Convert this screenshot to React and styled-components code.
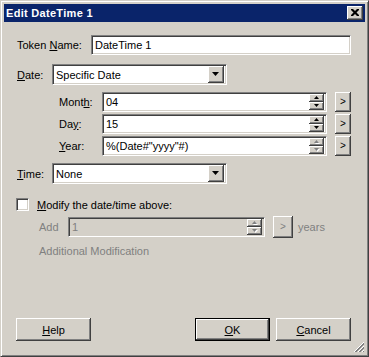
import React from 'react'
import styled, { createGlobalStyle } from 'styled-components'

const GlobalStyle = createGlobalStyle`
  html, body {
    margin: 0;
    padding: 0;
    background: #d4d0c8;
  }
  body {
    font-family: "Liberation Sans", Arial, sans-serif;
    font-size: 11px;
    color: #000;
  }
`

function Arrow({ up, disabled, size = 5 }) {
  const h = Math.ceil(size / 2)
  const pts = up
    ? `0,${h} ${size},${h} ${size / 2},0`
    : `0,0 ${size},0 ${size / 2},${h}`
  return (
    <svg width={size + 1} height={h + 1} viewBox={`0 0 ${size + 1} ${h + 1}`}>
      {disabled && <polygon points={pts} fill="#fff" transform="translate(1,1)" />}
      <polygon points={pts} fill={disabled ? '#808080' : '#000'} />
    </svg>
  )
}

function Spinner({ disabled }) {
  return (
    <Spin>
      <SpinBtn><Arrow up disabled={disabled} /></SpinBtn>
      <SpinBtn><Arrow disabled={disabled} /></SpinBtn>
    </Spin>
  )
}

function Combo({ value }) {
  return (
    <ComboBox>
      <FieldText>{value}</FieldText>
      <DropBtn><Arrow size={7} /></DropBtn>
    </ComboBox>
  )
}

function SpinRow({ label, value, disabled }) {
  return (
    <SubRow>
      <SubLabel>{label}</SubLabel>
      <Field $w={225}>
        <FieldText>{value}</FieldText>
        <Spinner disabled={disabled} />
      </Field>
      <MoreBtn>&gt;</MoreBtn>
    </SubRow>
  )
}

export default function App() {
  return (
    <>
      <GlobalStyle />
      <Window>
        <TitleBar>
          <Title>Edit DateTime 1</Title>
          <CloseBtn>
            <svg width="8" height="7" viewBox="0 0 8 7">
              <path d="M0 0h2l2 2l2-2h2v1l-2.5 2.5l2.5 2.5v1h-2l-2-2l-2 2h-2v-1l2.5-2.5l-2.5-2.5z" fill="#000" />
            </svg>
          </CloseBtn>
        </TitleBar>
        <Client>
          <Row>
            <Label $w={75}>Token <u>N</u>ame:</Label>
            <Field $grow>
              <FieldText>DateTime 1</FieldText>
            </Field>
          </Row>

          <Row $mt={9}>
            <Label $w={36}><u>D</u>ate:</Label>
            <Combo value="Specific Date" />
          </Row>

          <SubGroup>
            <SpinRow label={<>Mont<u>h</u>:</>} value="04" />
            <SpinRow label={<>Da<u>y</u>:</>} value="15" />
            <SpinRow label={<><u>Y</u>ear:</>} value={'%(Date#"yyyy"#)'} disabled />
          </SubGroup>

          <Row $mt={7}>
            <Label $w={36}><u>T</u>ime:</Label>
            <Combo value="None" />
          </Row>

          <Row $mt={14}>
            <CheckBox />
            <CheckLabel><u>M</u>odify the date/time above:</CheckLabel>
          </Row>

          <AddRow>
            <Muted $w={29}>Add</Muted>
            <Field $w={197} $disabled>
              <FieldText $disabled>1</FieldText>
              <Spinner disabled />
            </Field>
            <MoreBtn $h={22} $disabled>&gt;</MoreBtn>
            <Muted>years</Muted>
          </AddRow>

          <Extra>Additional Modification</Extra>

          <Buttons>
            <Button><u>H</u>elp</Button>
            <ButtonGroup>
              <Button $default><u>O</u>K</Button>
              <Button><u>C</u>ancel</Button>
            </ButtonGroup>
          </Buttons>

          <Grip>
            <svg width="12" height="12" viewBox="0 0 12 12">
              <path d="M11 1L1 11M11 5L5 11M11 9L9 11" stroke="#fff" strokeWidth="1" />
              <path d="M11 2L2 11M11 3L3 11M11 6L6 11M11 7L7 11M11 10L10 11" stroke="#808080" strokeWidth="1" />
            </svg>
          </Grip>
        </Client>
      </Window>
    </>
  )
}

const raised = `
  box-shadow: inset -1px -1px #404040, inset 1px 1px #fff, inset -2px -2px #808080;
  background: #d4d0c8;
`

const Window = styled.div`
  width: 369px;
  height: 357px;
  box-sizing: border-box;
  border: 1px solid;
  border-color: #d4d0c8 #404040 #404040 #d4d0c8;
  box-shadow: inset 1px 1px #fff, inset -1px -1px #808080;
  padding: 3px;
  display: flex;
  flex-direction: column;
  background: #d4d0c8;
`

const TitleBar = styled.div`
  height: 18px;
  flex: none;
  background: #0a246a;
  display: flex;
  align-items: center;
  justify-content: space-between;
  padding: 0 2px 0 2px;
`

const Title = styled.div`
  color: #fff;
  font-weight: bold;
  font-size: 11px;
  letter-spacing: 0.3px;
`

const CloseBtn = styled.div`
  width: 16px;
  height: 14px;
  box-sizing: border-box;
  ${raised}
  display: flex;
  align-items: center;
  justify-content: center;
  padding-bottom: 1px;
`

const Client = styled.div`
  position: relative;
  flex: 1;
  display: flex;
  flex-direction: column;
  padding: 13px 14px 12px 12px;
`

const Row = styled.div`
  display: flex;
  align-items: center;
  margin-top: ${p => p.$mt || 0}px;
`

const Label = styled.div`
  width: ${p => p.$w}px;
  flex: none;
  padding-left: 1px;
  box-sizing: border-box;
`

const Field = styled.div`
  display: flex;
  align-items: center;
  box-sizing: border-box;
  height: 20px;
  ${p => (p.$grow ? 'flex: 1;' : `width: ${p.$w}px; flex: none;`)}
  border: 1px solid;
  border-color: #808080 #fff #fff #808080;
  box-shadow: inset 1px 1px #404040, inset -1px -1px #d4d0c8;
  background: ${p => (p.$disabled ? '#d4d0c8' : '#fff')};
  padding: 2px;
`

const FieldText = styled.div`
  flex: 1;
  padding-left: 1px;
  line-height: 16px;
  white-space: nowrap;
  overflow: hidden;
  color: ${p => (p.$disabled ? '#808080' : '#000')};
`

const ComboBox = styled(Field)`
  width: 175px;
  height: 21px;
  flex: none;
`

const DropBtn = styled.div`
  width: 16px;
  height: 17px;
  box-sizing: border-box;
  ${raised}
  display: flex;
  align-items: center;
  justify-content: center;
`

const Spin = styled.div`
  display: flex;
  flex-direction: column;
  width: 15px;
  height: 16px;
`

const SpinBtn = styled.div`
  height: 8px;
  ${raised}
  display: flex;
  align-items: center;
  justify-content: center;
`

const SubGroup = styled.div`
  display: flex;
  flex-direction: column;
  gap: 2px;
  margin-top: 7px;
  padding-left: 43px;
`

const SubRow = styled.div`
  display: flex;
  align-items: center;
`

const SubLabel = styled.div`
  width: 43px;
  flex: none;
`

const MoreBtn = styled.div`
  width: 20px;
  height: ${p => p.$h || 20}px;
  box-sizing: border-box;
  margin-left: 8px;
  ${raised}
  display: flex;
  align-items: center;
  justify-content: center;
  font-size: 10px;
  padding-bottom: 1px;
  color: ${p => (p.$disabled ? '#808080' : '#000')};
`

const CheckBox = styled.div`
  width: 13px;
  height: 13px;
  box-sizing: border-box;
  background: #fff;
  border: 1px solid;
  border-color: #808080 #fff #fff #808080;
  box-shadow: inset 1px 1px #404040, inset -1px -1px #d4d0c8;
`

const CheckLabel = styled.div`
  margin-left: 8px;
`

const AddRow = styled.div`
  display: flex;
  align-items: center;
  margin-top: 5px;
  padding-left: 23px;

  & > :last-child {
    margin-left: 5px;
  }
`

const Muted = styled.div`
  color: #808080;
  ${p => (p.$w ? `width: ${p.$w}px; flex: none;` : '')}
`

const Extra = styled(Muted)`
  margin-top: 6px;
  padding-left: 23px;
  line-height: 14px;
`

const Buttons = styled.div`
  margin-top: auto;
  display: flex;
  justify-content: space-between;
`

const ButtonGroup = styled.div`
  display: flex;
  gap: 6px;
`

const Button = styled.div`
  width: 75px;
  height: 23px;
  box-sizing: border-box;
  display: flex;
  align-items: center;
  justify-content: center;
  ${raised}
  ${p =>
    p.$default &&
    `
    border: 1px solid #000;
  `}
`

const Grip = styled.div`
  position: absolute;
  right: 0;
  bottom: 0;
  width: 12px;
  height: 12px;
`
